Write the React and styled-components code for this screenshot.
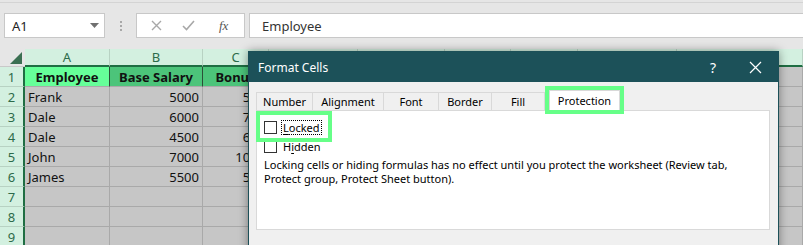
import React from "react";
import styled, { createGlobalStyle } from "styled-components";

const GlobalStyle = createGlobalStyle`
  html, body {
    margin: 0;
    padding: 0;
  }
  body {
    width: 803px;
    height: 245px;
    overflow: hidden;
    background: #e6e6e6;
    font-family: "Noto Sans", "Open Sans", sans-serif;
  }
`;

const Page = styled.div`
  position: relative;
  width: 803px;
  height: 245px;
  overflow: hidden;
  background: #e6e6e6;
`;

const TopEdge = styled.div`
  height: 2px;
  border-bottom: 1px solid #d4d4d4;
`;

const FormulaRow = styled.div`
  display: flex;
  align-items: center;
  height: 25px;
  margin-top: 10px;
  padding-left: 4px;
`;

const NameBox = styled.div`
  box-sizing: border-box;
  width: 101px;
  height: 25px;
  display: flex;
  align-items: center;
  justify-content: space-between;
  padding: 0 5px 0 7px;
  background: #fff;
  border: 1px solid #c8c8c8;
  font-size: 13px;
  color: #222;
`;

const Grip = styled.div`
  width: 31px;
  display: flex;
  flex-direction: column;
  align-items: center;
  gap: 2px;

  span {
    width: 2px;
    height: 2px;
    background: #a8a8a8;
  }
`;

const FxBox = styled.div`
  box-sizing: border-box;
  width: 109px;
  height: 25px;
  display: flex;
  align-items: center;
  padding: 0 0 0 14px;
  gap: 20px;
  background: #fff;
  border: 1px solid #c8c8c8;
`;

const FxLabel = styled.span`
  font-family: "Liberation Serif", serif;
  font-style: italic;
  font-size: 13px;
  color: #555;
  margin-left: 4px;
`;

const FormulaInput = styled.div`
  flex: 1;
  box-sizing: border-box;
  height: 25px;
  margin-left: 4px;
  display: flex;
  align-items: center;
  padding-left: 12px;
  background: #fff;
  border: 1px solid #c8c8c8;
  border-right: none;
  font-size: 13px;
  color: #333;
`;

const Sheet = styled.div`
  margin-top: 11px;
  display: grid;
  grid-template-columns: 25px 85px 93px 66px 89px 87px 66px 67px 99px 1fr;
  grid-template-rows: 18px;
  grid-auto-rows: 20px;
  font-size: 13px;
`;

const Corner = styled.div`
  box-sizing: border-box;
  display: flex;
  align-items: flex-end;
  justify-content: flex-end;
  padding: 0 3px 2px 0;
  background: #e6e6e6;
  border-bottom: 1px solid #c9c9c9;
`;

const ColHead = styled.div`
  box-sizing: border-box;
  display: flex;
  align-items: center;
  justify-content: center;
  background: #d3f0e0;
  color: #2d6b4a;
  border-right: 1px solid #b8d2c3;
  border-bottom: 2px solid #1f6e43;
`;

const RowHead = styled.div`
  box-sizing: border-box;
  display: flex;
  align-items: center;
  justify-content: center;
  background: #d3f0e0;
  color: #2d6b4a;
  border-right: 2px solid #1f6e43;
  border-bottom: 1px solid #b8d2c3;
`;

const fills = {
  bright: "#66ff99",
  mid: "#4cc47a",
  plain: "#c6c6c6",
};

const Cell = styled.div`
  box-sizing: border-box;
  display: flex;
  align-items: center;
  justify-content: ${(p) =>
    p.$align === "right" ? "flex-end" : p.$align === "center" ? "center" : "flex-start"};
  padding: 0 3px;
  overflow: hidden;
  white-space: nowrap;
  background: ${(p) => fills[p.$fill || "plain"]};
  border-right: 1px solid ${(p) => (p.$fill ? "#2c4f38" : "#a9a9a9")};
  border-bottom: 1px solid #a9a9a9;
  font-weight: ${(p) => (p.$bold ? 700 : 400)};
  color: #111;
`;

const Dialog = styled.div`
  position: absolute;
  left: 248px;
  top: 51px;
  box-sizing: border-box;
  width: 531px;
  height: 210px;
  background: #f0f0f0;
  border: 1px solid #1c5058;
  box-shadow: 0 0 9px rgba(0, 0, 0, 0.4);
  font-size: 11px;
  color: #000;
`;

const TitleBar = styled.div`
  height: 30px;
  display: flex;
  align-items: center;
  padding-left: 9px;
  background: #1c5159;
  color: #fff;
  font-size: 12px;
`;

const TitleButtons = styled.div`
  margin-left: auto;
  display: flex;
  align-items: center;
  gap: 33px;
  padding-right: 16px;
  font-size: 14px;
`;

const DialogBody = styled.div`
  padding: 8px 0 0 7px;
`;

const TabStrip = styled.div`
  display: flex;
  align-items: flex-end;
  height: 20px;
`;

const Tab = styled.div`
  box-sizing: border-box;
  width: ${(p) => p.$w}px;
  height: ${(p) => (p.$active ? 20 : 18)}px;
  margin-left: ${(p) => (p.$active ? 4 : 0)}px;
  display: flex;
  align-items: center;
  justify-content: center;
  background: ${(p) => (p.$active ? "#fff" : "#f0f0f0")};
  border: 1px solid #d9d9d9;
  border-left: ${(p) => (p.$first || p.$active ? "1px solid #d9d9d9" : "none")};
  border-bottom: none;
  outline: ${(p) => (p.$active ? "4px solid #66ff88" : "none")};
  position: relative;
  z-index: ${(p) => (p.$active ? 1 : 0)};
`;

const Panel = styled.div`
  box-sizing: border-box;
  width: 514px;
  height: 120px;
  background: #fff;
  border: 1px solid #d9d9d9;
`;

const CheckRow = styled.div`
  box-sizing: border-box;
  display: flex;
  align-items: ${(p) => (p.$marked ? "flex-start" : "center")};
  gap: 4px;
  width: ${(p) => (p.$marked ? "76px" : "auto")};
  height: ${(p) => (p.$marked ? "31px" : "13px")};
  margin: ${(p) => (p.$marked ? "0 0 0 -1px" : "-2px 0 0 0")};
  padding: ${(p) => (p.$marked ? "10px 0 0 8px" : "0 0 0 7px")};
  outline: ${(p) => (p.$marked ? "4px solid #66ff88" : "none")};
  outline-offset: -4px;
`;

const Box = styled.span`
  box-sizing: border-box;
  width: 13px;
  height: 13px;
  flex: none;
  background: #fff;
  border: 1px solid #333;
`;

const Label = styled.span`
  line-height: 13px;
  padding: 0 1px;
  border: 1px dotted ${(p) => (p.$focus ? "#000" : "transparent")};
  margin-top: ${(p) => (p.$focus ? "-1px" : "0")};

  u {
    text-decoration-thickness: 1px;
    text-underline-offset: 2px;
  }
`;

const Note = styled.p`
  margin: 5px 0 0 7px;
  line-height: 14px;
`;

const CloseIcon = () => (
  <svg width="13" height="13" viewBox="0 0 13 13">
    <path d="M1 1 L12 12 M12 1 L1 12" stroke="#fff" strokeWidth="1.2" />
  </svg>
);

const columns = ["A", "B", "C", "D", "E", "F", "G", "H", "I"];

const rows = [
  ["Frank", "5000", "500"],
  ["Dale", "6000", "700"],
  ["Dale", "4500", "600"],
  ["John", "7000", "1000"],
  ["James", "5500", "500"],
  ["", "", ""],
  ["", "", ""],
  ["", "", ""],
];

const tabs = [
  { name: "Number", w: 57 },
  { name: "Alignment", w: 71 },
  { name: "Font", w: 55 },
  { name: "Border", w: 53 },
  { name: "Fill", w: 53 },
];

const App = () => {
  return (
    <Page>
      <GlobalStyle />
      <TopEdge />
      <FormulaRow>
        <NameBox>
          A1
          <svg width="9" height="5" viewBox="0 0 9 5">
            <path d="M0 0 L9 0 L4.5 5 Z" fill="#707070" />
          </svg>
        </NameBox>
        <Grip>
          <span />
          <span />
          <span />
        </Grip>
        <FxBox>
          <svg width="11" height="11" viewBox="0 0 11 11">
            <path d="M1 1 L10 10 M10 1 L1 10" stroke="#a8a8a8" strokeWidth="1.4" />
          </svg>
          <svg width="13" height="11" viewBox="0 0 13 11">
            <path d="M1 6 L4.5 9.5 L12 1" stroke="#a8a8a8" strokeWidth="1.6" fill="none" />
          </svg>
          <FxLabel>fx</FxLabel>
        </FxBox>
        <FormulaInput>Employee</FormulaInput>
      </FormulaRow>

      <Sheet>
        <Corner>
          <svg width="12" height="12" viewBox="0 0 12 12">
            <path d="M12 0 L12 12 L0 12 Z" fill="#3b6f52" />
          </svg>
        </Corner>
        {columns.map((c) => (
          <ColHead key={c}>{c}</ColHead>
        ))}

        <RowHead>1</RowHead>
        <Cell $fill="bright" $bold $align="center">Employee</Cell>
        <Cell $fill="mid" $bold $align="center">Base Salary</Cell>
        <Cell $fill="mid" $bold $align="center">Bonus</Cell>
        {columns.slice(3).map((c) => (
          <Cell key={c} />
        ))}

        {rows.map((r, ri) => (
          <React.Fragment key={ri}>
            <RowHead>{ri + 2}</RowHead>
            <Cell>{r[0]}</Cell>
            <Cell $align="right">{r[1]}</Cell>
            <Cell $align="right">{r[2]}</Cell>
            {columns.slice(3).map((c) => (
              <Cell key={c} />
            ))}
          </React.Fragment>
        ))}
      </Sheet>

      <Dialog>
        <TitleBar>
          Format Cells
          <TitleButtons>
            <span>?</span>
            <CloseIcon />
          </TitleButtons>
        </TitleBar>
        <DialogBody>
          <TabStrip>
            {tabs.map((t, i) => (
              <Tab key={t.name} $w={t.w} $first={i === 0}>
                {t.name}
              </Tab>
            ))}
            <Tab $w={71} $active>
              Protection
            </Tab>
          </TabStrip>
          <Panel>
            <CheckRow $marked>
              <Box />
              <Label $focus>
                <u>L</u>ocked
              </Label>
            </CheckRow>
            <CheckRow>
              <Box />
              <Label>
                H<u>i</u>dden
              </Label>
            </CheckRow>
            <Note>
              Locking cells or hiding formulas has no effect until you protect the worksheet (Review tab,
              <br />
              Protect group, Protect Sheet button).
            </Note>
          </Panel>
        </DialogBody>
      </Dialog>
    </Page>
  );
};

export default App;
